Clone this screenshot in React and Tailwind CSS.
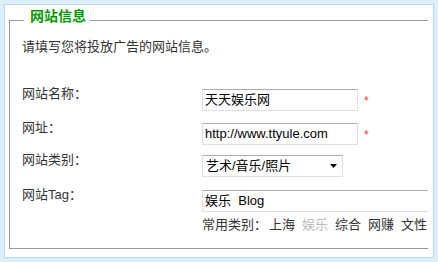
import React from 'react';

const font = { fontFamily: '"Liberation Sans", "Noto Sans CJK SC", sans-serif' };

const Star = () => (
  <span className="ml-[6px] pt-[6px] text-[12px] leading-[12px] text-[#ff3333]">*</span>
);

const boxCls =
  'h-[22px] border border-[#dde1e7] border-t-[#abadb3] bg-white px-[2px] text-[13px] leading-[20px] text-black';

const App = () => {
  const hints = ['上海', '娱乐', '综合', '网赚', '文性'];

  return (
    <div className="w-[438px] h-[262px] bg-[#dceefa] p-[4px]" style={font}>
      <div className="h-full border border-[#b7d8ee] bg-white pt-[4px] pl-[4px] pr-[5px]">
        <fieldset className="min-w-0 h-[240px] border-l border-t border-b border-[#999999]">
          <legend className="ml-[14px] pl-[6px] pr-[4px] pb-[8px] text-[14px] leading-[14px] font-bold text-[#009900]">
            网站信息
          </legend>

          <div className="w-full overflow-hidden pl-[12px] text-[13px] text-[#333333]">
            <p className="mt-[6px] leading-[20px]">请填写您将投放广告的网站信息。</p>

            {/* 网站名称 */}
            <div className="mt-[32px] flex">
              <div className="w-[180px] shrink-0 leading-[10px]">网站名称：</div>
              <div className="flex items-start">
                <div className={`${boxCls} w-[156px]`}>天天娱乐网</div>
                <Star />
              </div>
            </div>

            {/* 网址 */}
            <div className="mt-[12px] flex">
              <div className="w-[180px] shrink-0 leading-[10px]">网址：</div>
              <div className="flex items-start">
                <div className={`${boxCls} w-[156px]`}>http://www.ttyule.com</div>
                <Star />
              </div>
            </div>

            {/* 类别 */}
            <div className="mt-[10px] flex">
              <div className="w-[180px] shrink-0 leading-[10px]">网站类别：</div>
              <div className={`${boxCls} w-[141px] flex items-center justify-between pl-[3px] pr-[5px]`}>
                <span>艺术/音乐/照片</span>
                <svg width="7" height="4" viewBox="0 0 7 4">
                  <path d="M0 0 H7 L3.5 4 Z" fill="#000" />
                </svg>
              </div>
            </div>

            {/* Tag */}
            <div className="mt-[13px] flex">
              <div className="w-[180px] shrink-0 leading-[10px]">网站Tag：</div>
              <div className="flex flex-col">
                <div className={`${boxCls} w-[260px] whitespace-pre`}>娱乐  Blog</div>
                <div className="mt-[5px] flex leading-[15px] whitespace-nowrap">
                  <span className="mr-[2px]">常用类别：</span>
                  <div className="flex gap-[7px]">
                    {hints.map((h) => (
                      <span key={h} className={h === '娱乐' ? 'text-[#bbbbbb]' : ''}>
                        {h}
                      </span>
                    ))}
                  </div>
                </div>
              </div>
            </div>
          </div>
        </fieldset>
      </div>
    </div>
  );
};

export default App;
